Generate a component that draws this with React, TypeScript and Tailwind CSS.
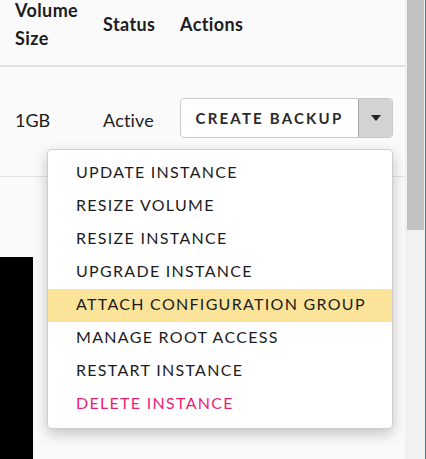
import React from 'react';

const menuItems = [
  'UPDATE INSTANCE',
  'RESIZE VOLUME',
  'RESIZE INSTANCE',
  'UPGRADE INSTANCE',
  'ATTACH CONFIGURATION GROUP',
  'MANAGE ROOT ACCESS',
  'RESTART INSTANCE',
  'DELETE INSTANCE',
];

export default function App() {
  return (
    <div className="flex h-[459px] w-[426px] overflow-hidden bg-[#fafafa] text-[#1c1c1c] [font-family:Lato,'Open_Sans',sans-serif]">
      <div className="relative flex w-[405px] flex-col">
        {/* header */}
        <div className="grid grid-cols-[88px_77px_1fr] items-center border-b-2 border-[#e2e2e2] pb-[13px] pl-[15px] -mt-[4px] text-[18px] font-bold leading-[28px] tracking-[0.4px]">
          <div>Volume<br />Size</div>
          <div>Status</div>
          <div>Actions</div>
        </div>

        {/* instance row */}
        <div className="grid h-[110px] grid-cols-[88px_77px_1fr] items-start border-b border-[#e2e2e2] pl-[15px] pt-[31px] text-[18px]">
          <div className="pt-[9px]">1GB</div>
          <div className="pt-[9px] tracking-[0.2px]">Active</div>
          <div className="relative w-[213px]">
            <div className="flex h-[40px] rounded-[4px] border border-[#c9c9c9] bg-white">
              <button className="flex flex-1 items-center justify-center text-[15px] font-bold tracking-[2.2px] text-[#2a2a2a]">
                CREATE BACKUP
              </button>
              <button className="flex w-[34px] items-center justify-center rounded-r-[4px] border-l border-[#a8a8a8] bg-[#d3d3d3]">
                <svg width="10" height="6" viewBox="0 0 10 6">
                  <path d="M0 0h10L5 6z" fill="#222" />
                </svg>
              </button>
            </div>

            {/* dropdown */}
            <div className="absolute right-0 top-[51px] z-10 w-[346px] rounded-[4px] border border-[#cfcfcf] bg-white py-[7px] shadow-[0_5px_14px_rgba(0,0,0,0.22)]">
              {menuItems.map((item) => (
                <div
                  key={item}
                  className={`flex h-[33px] items-center pb-[3px] pl-[28px] text-[16px] tracking-[1.3px] ${
                    item === 'ATTACH CONFIGURATION GROUP' ? 'bg-[#fbe39a]' : ''
                  } ${item === 'DELETE INSTANCE' ? 'text-[#ea1f73]' : 'text-[#1c1c1c]'}`}
                >
                  {item}
                </div>
              ))}
            </div>
          </div>
        </div>

        <div className="flex-1 pt-[80px]">
          <div className="h-full w-[33px] bg-black" />
        </div>
      </div>

      {/* scrollbar */}
      <div className="flex w-[21px] bg-[#f1f1f1]">
        <div className="ml-[2px] h-[230px] w-[17px] bg-[#c1c1c1]" />
        <div className="ml-auto h-full w-px bg-[#4d7c99]" />
      </div>
    </div>
  );
}
